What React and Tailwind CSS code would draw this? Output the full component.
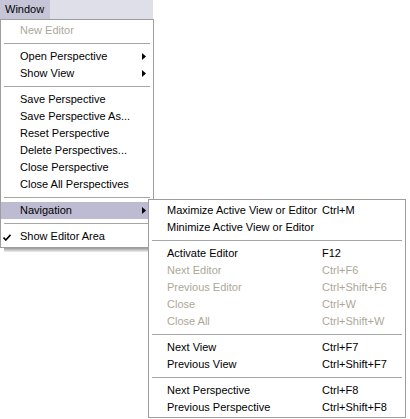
import React from "react";

const mainItems = [
  { label: "New Editor", disabled: true },
  { sep: true },
  { label: "Open Perspective", sub: true },
  { label: "Show View", sub: true },
  { sep: true },
  { label: "Save Perspective" },
  { label: "Save Perspective As..." },
  { label: "Reset Perspective" },
  { label: "Delete Perspectives..." },
  { label: "Close Perspective" },
  { label: "Close All Perspectives" },
  { sep: true },
  { label: "Navigation", sub: true, active: true },
  { sep: true },
  { label: "Show Editor Area", checked: true },
];

const navItems = [
  { label: "Maximize Active View or Editor", key: "Ctrl+M" },
  { label: "Minimize Active View or Editor" },
  { sep: true },
  { label: "Activate Editor", key: "F12" },
  { label: "Next Editor", key: "Ctrl+F6", disabled: true },
  { label: "Previous Editor", key: "Ctrl+Shift+F6", disabled: true },
  { label: "Close", key: "Ctrl+W", disabled: true },
  { label: "Close All", key: "Ctrl+Shift+W", disabled: true },
  { sep: true },
  { label: "Next View", key: "Ctrl+F7" },
  { label: "Previous View", key: "Ctrl+Shift+F7" },
  { sep: true },
  { label: "Next Perspective", key: "Ctrl+F8" },
  { label: "Previous Perspective", key: "Ctrl+Shift+F8" },
];

const Arrow = () => (
  <svg width="4" height="7" viewBox="0 0 4 7" className="absolute left-[141px] top-[5px]">
    <path d="M0 0 L4 3.5 L0 7 Z" fill="#000" />
  </svg>
);

const Check = () => (
  <svg width="8" height="7" viewBox="0 0 8 7" className="absolute left-[2px] top-[6px]">
    <path d="M0.5 3.5 L2.8 6 L7.5 0.8" stroke="#000" strokeWidth="1.6" fill="none" />
  </svg>
);

const Sep = () => (
  <div className="h-[9px] flex items-center px-[3px]">
    <div className="h-px w-full bg-[#a6a6a6]" />
  </div>
);

export default function App() {
  return (
    <div
      className="relative w-[410px] h-[419px] bg-white text-[11px] leading-none text-black"
      style={{ fontFamily: '"Liberation Sans", Arial, sans-serif' }}
    >
      {/* menu bar */}
      <div className="w-[153px] h-[19px] bg-[#dfdfe9] flex">
        <div className="w-[50px] h-[19px] bg-[#c6c5d7] pl-[5px] flex items-center">Window</div>
      </div>

      {/* Window menu */}
      <div className="absolute left-0 top-[19px] w-[154px]">
        <div className="border border-[#9d9d9d] bg-white py-[2px]">
          {mainItems.map((it, i) =>
            it.sep ? (
              <Sep key={i} />
            ) : (
              <div
                key={i}
                className={`relative h-[17px] pl-[19px] flex items-center ${
                  it.active ? "bg-[#bdbbd1]" : ""
                } ${it.disabled ? "text-[#aca899]" : ""}`}
              >
                {it.checked && <Check />}
                {it.label}
                {it.sub && <Arrow />}
              </div>
            )
          )}
        </div>
        <div className="ml-[4px] h-[4px] bg-gradient-to-b from-[#9a9a9a] to-[#f0f0f0]" />
      </div>

      {/* Navigation submenu */}
      <div className="absolute left-[148px] top-[199px] w-[258px] border border-[#9d9d9d] bg-white pt-[2px] pb-[1px]">
        {navItems.map((it, i) =>
          it.sep ? (
            <Sep key={i} />
          ) : (
            <div
              key={i}
              className={`h-[17px] pl-[18px] grid grid-cols-[155px_1fr] items-center ${
                it.disabled ? "text-[#aca899]" : ""
              }`}
            >
              <span className="whitespace-nowrap">{it.label}</span>
              <span>{it.key}</span>
            </div>
          )
        )}
      </div>
    </div>
  );
}
